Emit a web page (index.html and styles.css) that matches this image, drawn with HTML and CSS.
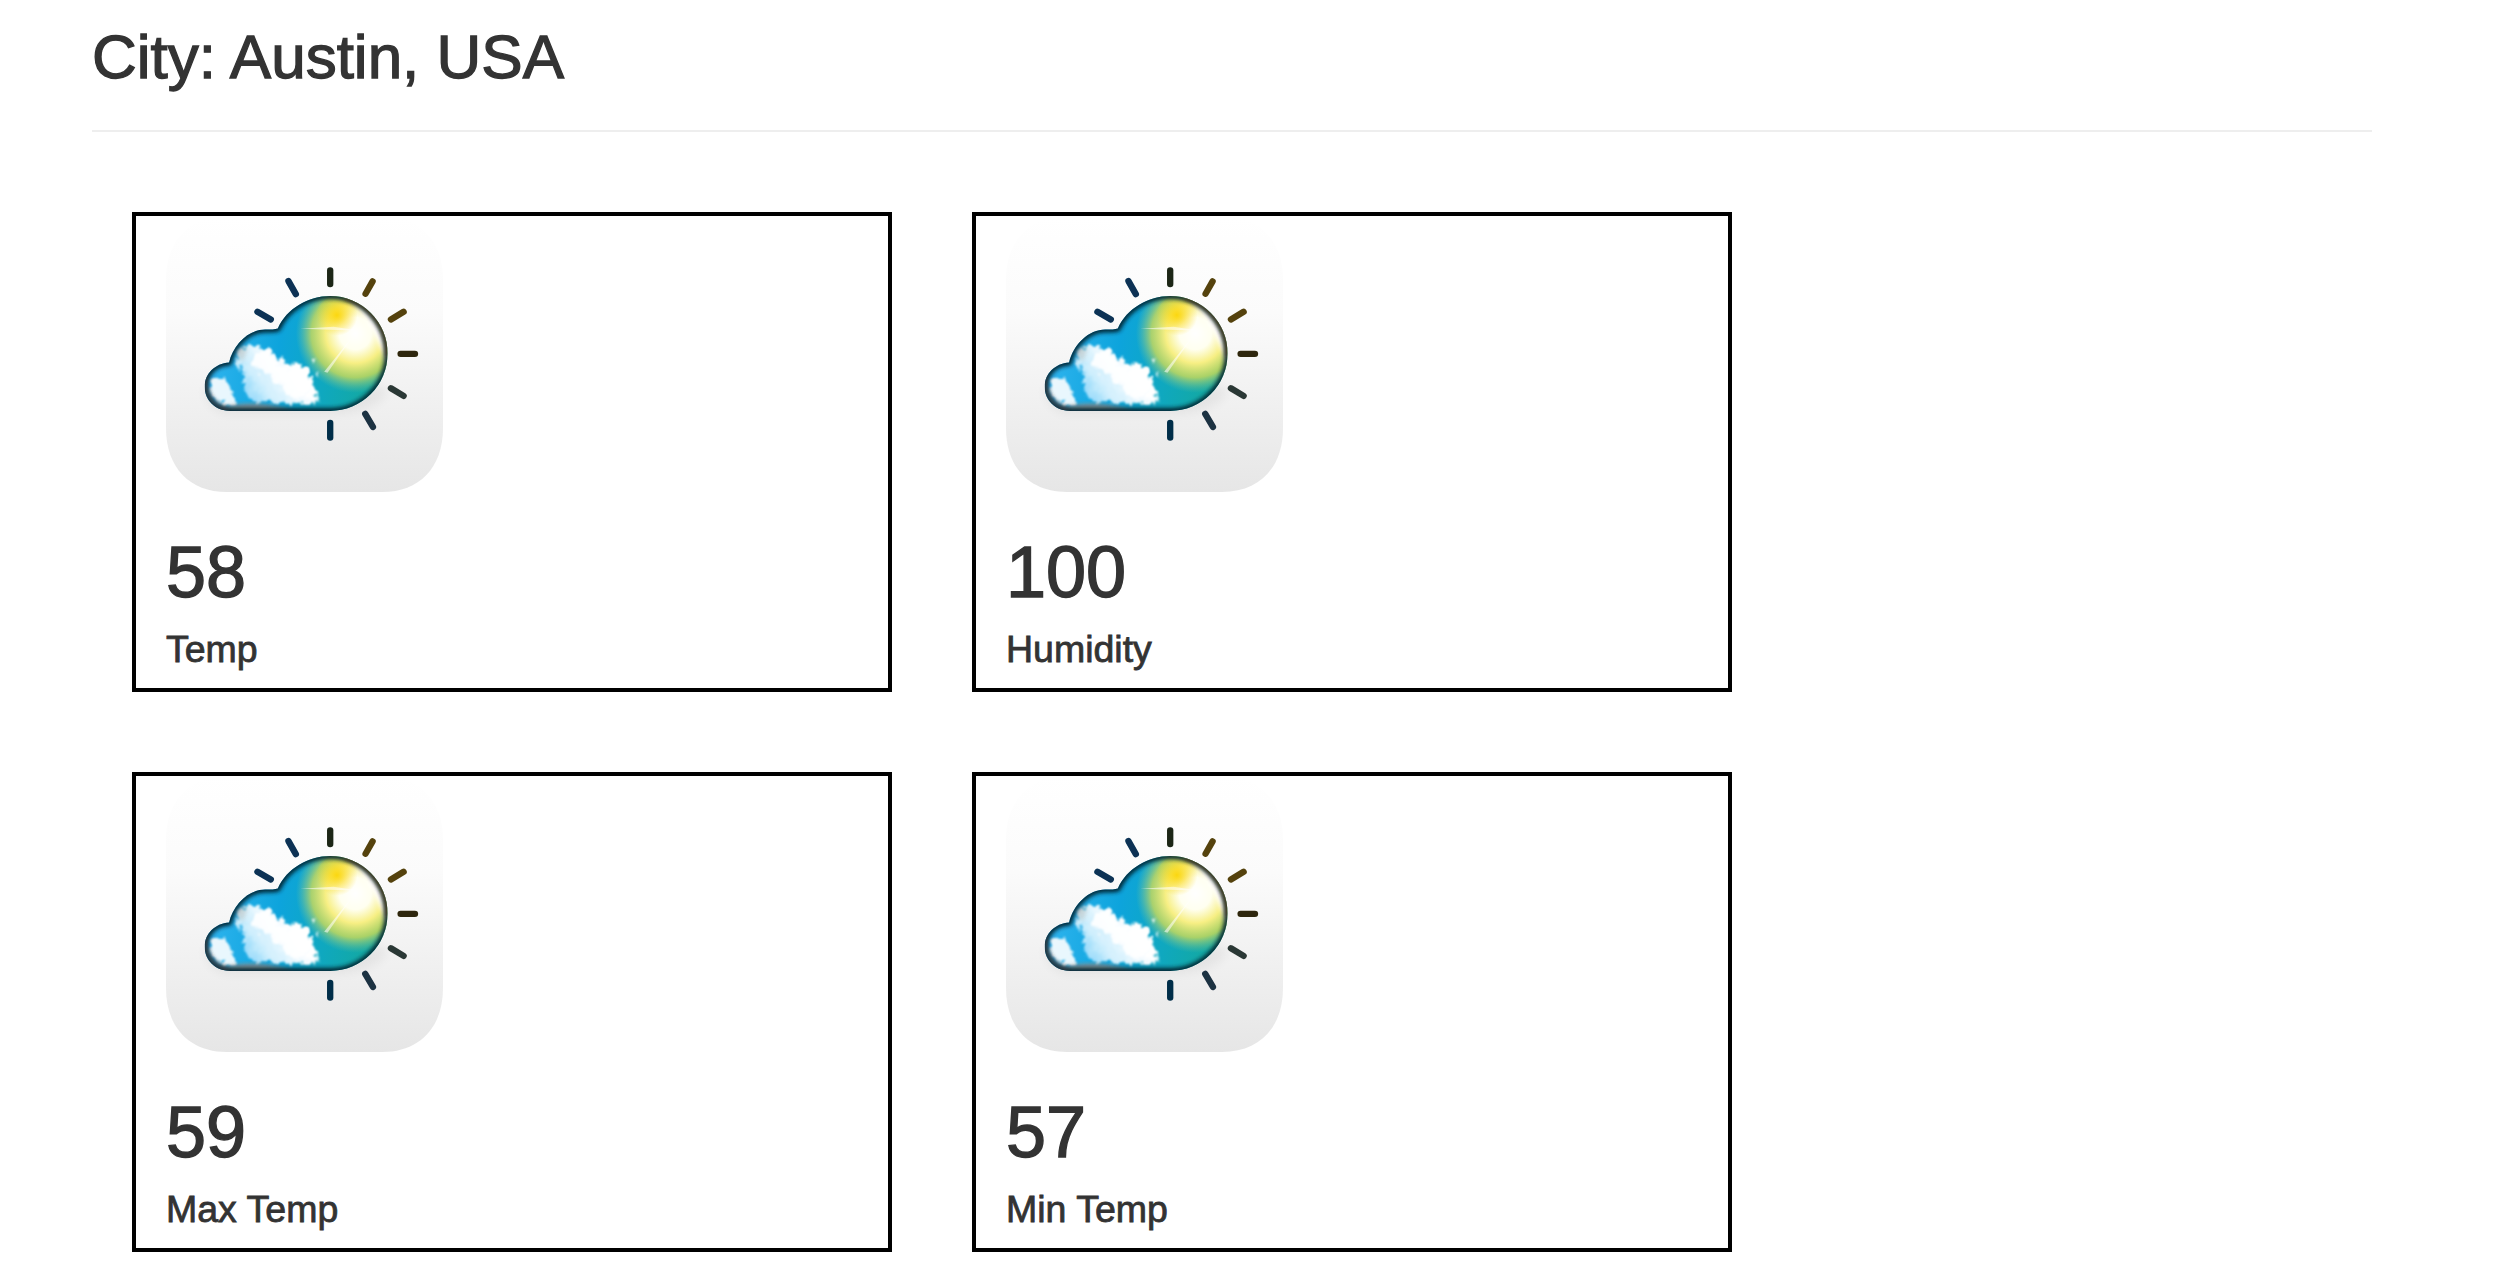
FILE: index.html
```html
<!DOCTYPE html>
<html lang="en">
<head>
<meta charset="utf-8">
<title>Weather</title>
<link rel="stylesheet" href="styles.css">
</head>
<body>
<main class="page">
  <h1 class="city">City: Austin, USA</h1>
  <section class="cards">
    <article class="card">
      <svg class="icon" viewBox="138 48 830 830" aria-hidden="true">
        <defs>
          <linearGradient id="tile" x1="0" y1="0" x2="0" y2="1">
            <stop offset="0" stop-color="#ffffff"/>
            <stop offset="0.35" stop-color="#fbfbfb"/>
            <stop offset="1" stop-color="#e6e6e6"/>
          </linearGradient>
          <linearGradient id="sky" x1="0" y1="0" x2="1" y2="0.1">
            <stop offset="0" stop-color="#38b8f4"/>
            <stop offset="0.45" stop-color="#0da4dc"/>
            <stop offset="0.7" stop-color="#0fa8c0"/>
            <stop offset="1" stop-color="#14a99a"/>
          </linearGradient>
          <radialGradient id="sun" gradientUnits="userSpaceOnUse" cx="705" cy="400" r="178">
            <stop offset="0" stop-color="#ffffff"/>
            <stop offset="0.27" stop-color="#fffff0"/>
            <stop offset="0.5" stop-color="#f7ef84"/>
            <stop offset="0.74" stop-color="#cfdc58" stop-opacity="0.8"/>
            <stop offset="1" stop-color="#7cc69a" stop-opacity="0"/>
          </radialGradient>
          <radialGradient id="flare" gradientUnits="userSpaceOnUse" cx="650" cy="345" r="62">
            <stop offset="0" stop-color="#fbd70f"/>
            <stop offset="1" stop-color="#fbd70f" stop-opacity="0"/>
          </radialGradient>
          <linearGradient id="cumulus" gradientUnits="userSpaceOnUse" x1="350" y1="600" x2="500" y2="490">
            <stop offset="0" stop-color="#6ccaf8"/>
            <stop offset="0.45" stop-color="#cdeefd"/>
            <stop offset="1" stop-color="#ffffff"/>
          </linearGradient>
          <clipPath id="cloudClip">
            <path d="M330 632C285 632 254 600 254 560C254 520 285 490 327 487C340 430 390 385 440 388C452 388 465 388 473 385C500 325 565 288 630 288A172 172 0 0 1 630 632Z"/>
          </clipPath>
          <filter id="soft" x="-20%" y="-20%" width="140%" height="140%"><feGaussianBlur stdDeviation="6"/></filter>
          <filter id="shade" x="-30%" y="-30%" width="160%" height="160%"><feGaussianBlur stdDeviation="16"/></filter>
          <filter id="tiny" x="-20%" y="-20%" width="140%" height="140%"><feGaussianBlur stdDeviation="2"/></filter>
          <filter id="rim" x="-20%" y="-20%" width="140%" height="140%"><feGaussianBlur stdDeviation="6"/></filter>
          <filter id="fluff" x="-20%" y="-20%" width="140%" height="140%">
            <feTurbulence type="fractalNoise" baseFrequency="0.05" numOctaves="4" seed="7" result="n"/>
            <feDisplacementMap in="SourceGraphic" in2="n" scale="38" xChannelSelector="R" yChannelSelector="G"/>
            <feGaussianBlur stdDeviation="2.5"/>
          </filter>
          <g id="weather">
            <path d="M138 240C138 120 210 48 320 48H786C896 48 968 120 968 240V683C968 803 896 875 786 875H320C210 875 138 803 138 683Z" fill="url(#tile)"/>
            <path d="M330 640C285 640 254 605 254 560H803C803 600 740 640 630 640Z" fill="#000" opacity="0.05" filter="url(#shade)"/>
            <g fill="none" stroke-width="19" stroke-linecap="round" filter="url(#tiny)">
              <path d="M630 211V252" stroke="#1c2818"/>
              <path d="M757 244L736 281" stroke="#54420c"/>
              <path d="M850 335L812 358" stroke="#54420c"/>
              <path d="M841 461H884" stroke="#2e2808"/>
              <path d="M812 564L850 587" stroke="#2c3834"/>
              <path d="M735 641L758 680" stroke="#1c3042"/>
              <path d="M630 668V712" stroke="#052e48"/>
              <path d="M505 243L527 282" stroke="#083254"/>
              <path d="M412 335L452 358" stroke="#083254"/>
            </g>
            <g clip-path="url(#cloudClip)">
              <rect x="240" y="280" width="580" height="360" fill="url(#sky)"/>
              <rect x="240" y="280" width="580" height="360" fill="url(#sun)"/>
              <rect x="590" y="285" width="125" height="125" fill="url(#flare)"/>
              <path d="M690 296C770 325 812 395 800 490C775 415 735 345 690 296Z" fill="#fff" filter="url(#soft)"/>
              <path d="M540 386L640 380L720 392L630 389Z" fill="#fff" opacity="0.55" filter="url(#tiny)"/>
              <path d="M612 515L700 405L622 518Z" fill="#fff" opacity="0.55" filter="url(#tiny)"/>
              <path d="M352 448C395 428 430 432 455 465C490 485 530 490 565 503C572 540 594 570 592 606C540 612 480 608 430 606C385 612 365 570 372 525C358 500 345 480 352 448Z" fill="url(#cumulus)" filter="url(#fluff)"/>
              <g fill="#fff" filter="url(#fluff)" opacity="0.9">
                <path d="M270 530L305 530C320 550 340 580 355 612C320 620 285 605 270 575Z"/>
                <circle cx="435" cy="485" r="36"/>
                <circle cx="525" cy="555" r="38"/>
                <circle cx="480" cy="525" r="30"/>
                <circle cx="555" cy="512" r="10"/>
                <circle cx="578" cy="480" r="6"/>
                <circle cx="590" cy="520" r="4"/>
              </g>
              <path d="M300 626C370 602 450 606 525 636H290Z" fill="#8d8d88" opacity="0.9" filter="url(#soft)"/>
              <path d="M352 452C358 438 372 432 382 444L370 480L352 476Z" fill="#b9b6b0" opacity="0.45" filter="url(#soft)"/>
              <path d="M330 632C285 632 254 600 254 560C254 520 285 490 327 487C340 430 390 385 440 388C452 388 465 388 473 385C500 325 565 288 630 288A172 172 0 0 1 630 632Z" fill="none" stroke="#03202e" stroke-width="18" filter="url(#rim)"/>
              <path d="M672 292A172 172 0 0 1 802 470" fill="none" stroke="#4b3a18" stroke-width="12" filter="url(#rim)"/>
              <path d="M258 525C248 565 268 612 322 630" fill="none" stroke="#3c3c40" stroke-width="10" filter="url(#rim)"/>
            </g>
          </g>
        </defs>
        <use href="#weather"/>
      </svg>
      <div class="value">58</div>
      <div class="label">Temp</div>
    </article>
    <article class="card">
      <svg class="icon" viewBox="138 48 830 830" aria-hidden="true"><use href="#weather"/></svg>
      <div class="value">100</div>
      <div class="label">Humidity</div>
    </article>
    <article class="card">
      <svg class="icon" viewBox="138 48 830 830" aria-hidden="true"><use href="#weather"/></svg>
      <div class="value">59</div>
      <div class="label">Max Temp</div>
    </article>
    <article class="card">
      <svg class="icon" viewBox="138 48 830 830" aria-hidden="true"><use href="#weather"/></svg>
      <div class="value">57</div>
      <div class="label">Min Temp</div>
    </article>
  </section>
</main>
</body>
</html>
```
FILE: styles.css
```css
html, body {
  margin: 0;
  background: #fff;
}
body {
  font-family: "Liberation Sans", Arial, sans-serif;
  color: #333;
  overflow: hidden;
}
.page {
  padding: 0 130px 0 92px;
}
.city {
  margin: 0;
  height: 130px;
  font-size: 62px;
  line-height: 113px;
  font-weight: 400;
  -webkit-text-stroke: 1.3px #333;
  border-bottom: 2px solid #eee;
}
.cards {
  display: grid;
  grid-template-columns: repeat(2, 760px);
  column-gap: 80px;
  row-gap: 80px;
  margin: 80px 0 0 40px;
}
.card {
  box-sizing: border-box;
  height: 480px;
  padding: 0 30px;
  border: 4px solid #000;
}
.icon {
  display: block;
  width: 277px;
  height: 277px;
}
.value {
  margin-top: 39px;
  font-size: 72px;
  line-height: 80px;
  -webkit-text-stroke: 1.4px #333;
}
.label {
  margin-top: 15px;
  font-size: 37.5px;
  line-height: 44px;
  -webkit-text-stroke: 0.8px #333;
}
```
